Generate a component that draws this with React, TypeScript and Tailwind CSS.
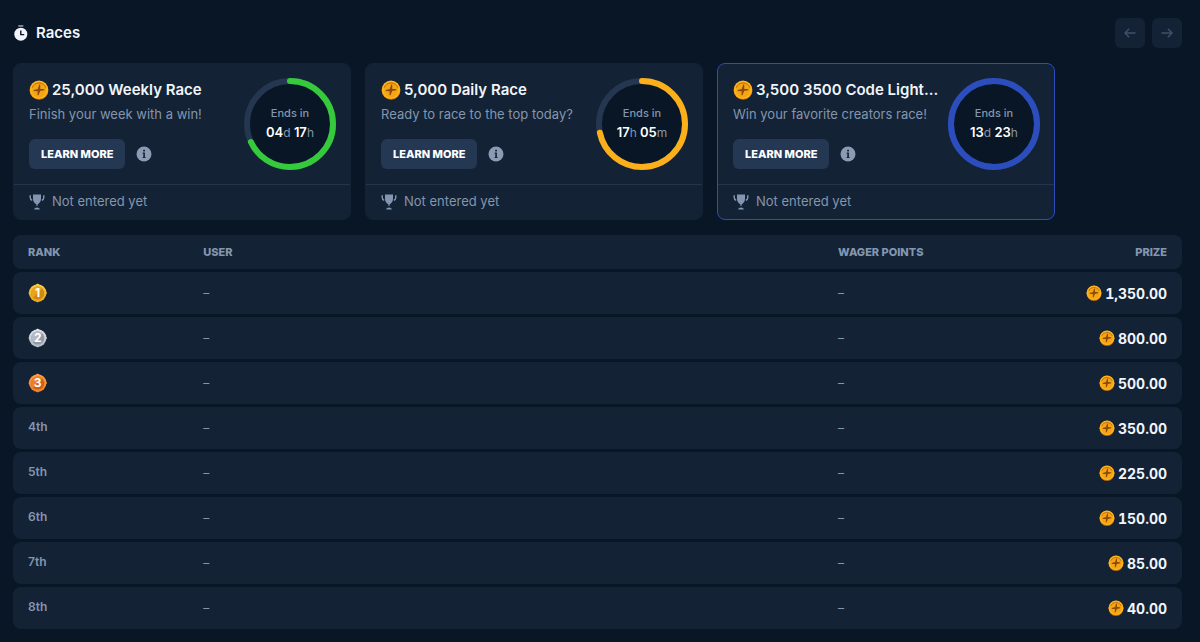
import { useId } from "react";

type Race = {
  amount: string;
  name: string;
  blurb: string;
  color: string;
  progress: number;
  time: [string, string][];
  active?: boolean;
};

const races: Race[] = [
  { amount: "25,000", name: "Weekly Race", blurb: "Finish your week with a win!", color: "#35c93c", progress: 0.68, time: [["04", "d"], ["17", "h"]] },
  { amount: "5,000", name: "Daily Race", blurb: "Ready to race to the top today?", color: "#fbb01b", progress: 0.716, time: [["17", "h"], ["05", "m"]] },
  { amount: "3,500", name: "3500 Code Light...", blurb: "Win your favorite creators race!", color: "#2b4dbd", progress: 1, time: [["13", "d"], ["23", "h"]], active: true },
];

const prizes = ["1,350.00", "800.00", "500.00", "350.00", "225.00", "150.00", "85.00", "40.00"];

const medals = [
  { light: "#fbd04a", rim: "#e9a51a", face: "#cf8a10" },
  { light: "#dfe3ea", rim: "#b4bac5", face: "#9299a6" },
  { light: "#ffa04c", rim: "#f07f22", face: "#cf6116" },
];

function Coin({ className }: { className: string }) {
  return (
    <svg viewBox="0 0 20 20" className={className} aria-hidden="true">
      <circle cx="10" cy="10.4" r="9.4" fill="#d97a0b" />
      <circle cx="10" cy="9.8" r="9.2" fill="#fdb41c" />
      <circle cx="10" cy="10" r="7.3" fill="#f4a514" />
      <path d="M3.2 7.6A7.3 7.3 0 0 1 16.8 7.6" fill="none" stroke="#b9690a" strokeWidth="1" />
      <path d="M11.2 4.6l.1 4.3 4 .1-.1 1.2-4.1.9-1.6 4.2-1-.1.1-4-3.9-.1.1-1.2 4-1 1.4-4.4z" fill="#8f4a08" />
    </svg>
  );
}

function Medal({ place }: { place: number }) {
  const id = useId();
  const m = medals[place - 1];
  return (
    <svg viewBox="0 0 20 20" className="size-5" role="img" aria-label={`Rank ${place}`}>
      <defs>
        <linearGradient id={id} x1="0" y1="0" x2="0" y2="1">
          <stop offset="0" stopColor={m.light} />
          <stop offset="1" stopColor={m.rim} />
        </linearGradient>
      </defs>
      <g fill={`url(#${id})`}>
        <circle cx="9.700" cy="10" r="8.700" />
        <path d="M9.700 .6l3 2.200h-6zM9.700 19.600l3.400-2.400H6.300zM.4 10l2-3v6zM19 10l-2-3v6z" />
      </g>
      <circle cx="9.700" cy="10" r="6.600" fill={m.face} />
      <path d="M5 14.700A6.600 6.600 0 0 1 14.400 5.300z" fill={m.rim} />
      <text x="9.7" y="14.2" textAnchor="middle" className="fill-white font-['Inter',sans-serif] text-[12px] font-bold">{place}</text>
    </svg>
  );
}

function Stopwatch() {
  return (
    <svg viewBox="0 0 16 16" className="size-4" aria-hidden="true">
      <path d="M5.300 .2h5v1.500h-5z" fill="#9aa7bb" />
      <circle cx="7.800" cy="9.200" r="6.500" fill="#f1f5fb" />
      <path d="M7.800 5.600v4h3.400" fill="none" stroke="#081625" strokeWidth="1.400" />
    </svg>
  );
}

function Trophy() {
  return (
    <svg viewBox="0 0 16 16" className="size-4" fill="#8496af" aria-hidden="true">
      <path d="M4 .4h8v4.400c0 2.600-1.200 4.400-3.300 5.400v1.600H7.300v-1.600C5.200 9.200 4 7.400 4 4.800z" />
      <path d="M5.200 15.500c.2-1.400 1-2.100 2.800-2.100s2.600.7 2.800 2.100z" />
      <path d="M1.200 1.200v2.400c0 1.300.7 2.300 2 2.800M14.800 1.200v2.400c0 1.300-.7 2.300-2 2.800" fill="none" stroke="#8496af" strokeWidth="1.400" />
    </svg>
  );
}

function InfoIcon() {
  return (
    <svg viewBox="0 0 16 16" className="size-4" aria-hidden="true">
      <circle cx="8" cy="8" r="7.5" fill="#8b9bb4" />
      <path d="M7.200 3.700h1.700v1.700H7.200zM6.700 6.600h2.200v4.300h.6V12H6.700v-1.100h.6V7.700h-.6z" fill="#132234" />
    </svg>
  );
}

function Arrow({ left }: { left?: boolean }) {
  return (
    <svg viewBox="0 0 12 12" className="size-3" fill="none" stroke="#405069" strokeWidth="1.5" strokeLinecap="round" strokeLinejoin="round" aria-hidden="true">
      {left ? <path d="M11 6H1.200M4.700 2.300L1 6l3.700 3.700" /> : <path d="M1 6h9.800M7.300 2.300L11 6 7.300 9.700" />}
    </svg>
  );
}

function Countdown({ race }: { race: Race }) {
  const length = 2 * Math.PI * 43;
  return (
    <div className="grid size-[92px] shrink-0 place-items-center">
      <svg viewBox="0 0 92 92" className="col-start-1 row-start-1 size-full -rotate-90" aria-hidden="true">
        <circle cx="46" cy="46" r="43" fill="#081625" stroke="#253650" strokeWidth="6" />
        <circle cx="46" cy="46" r="43" fill="none" stroke={race.color} strokeWidth="6" strokeLinecap="round" strokeDasharray={`${length * race.progress} ${length}`} />
      </svg>
      <div className="relative col-start-1 row-start-1 pb-[2px] text-center leading-[19px]">
        <p className="text-[11px] font-medium text-[#8496af]">Ends in</p>
        <p className="text-[13px] font-semibold whitespace-nowrap text-white">
          {race.time.map(([value, unit], i) => (
            <span key={unit}>
              {i > 0 && " "}
              {value}
              <span className="text-[12px] font-normal text-[#8496af]">{unit}</span>
            </span>
          ))}
        </p>
      </div>
    </div>
  );
}

function RaceCard({ race }: { race: Race }) {
  return (
    <article className={`min-w-0 basis-[338px] rounded-lg border bg-[#132234] ${race.active ? "border-[#2b4dbd]" : "border-[#132234]"}`}>
      <div className="flex items-start justify-between gap-1 py-[14px] pr-[14px] pl-[15px]">
        <div className="min-w-0">
          <div className="flex items-center gap-[3px]">
            <Coin className="size-5 shrink-0" />
            <h2 className="text-[15px] leading-6 font-semibold whitespace-nowrap text-[#f1f5fb]">
              {race.amount} {race.name}
            </h2>
          </div>
          <p className="mt-[2px] text-[13px] leading-5 whitespace-nowrap text-[#8496af]">{race.blurb}</p>
          <div className="mt-[15px] flex items-center gap-[11px]">
            <button type="button" className="h-[30px] rounded-md bg-[#253853] px-3 text-[11px] font-extrabold whitespace-nowrap text-white">
              LEARN MORE
            </button>
            <button type="button" aria-label="Race information">
              <InfoIcon />
            </button>
          </div>
        </div>
        <Countdown race={race} />
      </div>
      <div className="flex h-[35px] items-center gap-[7px] border-t border-[#24354c] px-[15px] text-[13px] text-[#8496af]">
        <Trophy />
        Not entered yet
      </div>
    </article>
  );
}

export default function App() {
  return (
    <main className="min-h-screen bg-[#081625] pt-[18px] pr-[18px] pb-[10px] pl-[13px] font-['Inter',sans-serif]">
      <header className="flex h-[30px] items-center justify-between">
        <h1 className="flex items-center gap-[7px] text-[15px] leading-5 font-semibold text-[#f1f5fb]">
          <Stopwatch />
          Races
        </h1>
        <div className="flex gap-[7px]">
          <button type="button" disabled aria-label="Previous races" className="grid size-[30px] place-items-center rounded-md bg-[#132234]">
            <Arrow left />
          </button>
          <button type="button" disabled aria-label="Next races" className="grid size-[30px] place-items-center rounded-md bg-[#132234]">
            <Arrow />
          </button>
        </div>
      </header>

      <section className="mt-[15px] flex gap-[14px]">
        {races.map((race) => (
          <RaceCard key={race.amount} race={race} />
        ))}
      </section>

      <table className="mt-3 w-full table-fixed border-separate border-spacing-x-0 border-spacing-y-[3px] text-left">
        <colgroup>
          <col className="w-[15%]" />
          <col className="w-[54.3%]" />
          <col className="w-[15%]" />
          <col />
        </colgroup>
        <thead>
          <tr className="h-[34px] text-[11px] text-[#8496af]">
            <th className="rounded-l-lg bg-[#132234] px-[15px] font-extrabold">RANK</th>
            <th className="bg-[#132234] px-[15px] font-extrabold">USER</th>
            <th className="bg-[#132234] px-[15px] font-extrabold">WAGER POINTS</th>
            <th className="rounded-r-lg bg-[#132234] px-[15px] text-right font-extrabold">PRIZE</th>
          </tr>
        </thead>
        <tbody>
          {prizes.map((prize, i) => (
            <tr key={prize} className="h-[42px] text-[12px] text-[#8496af]">
              <td className="rounded-l-lg bg-[#132234] px-[15px] font-semibold">
                {i < 3 ? <Medal place={i + 1} /> : <span className="block pb-[3px]">{i + 1}th</span>}
              </td>
              <td className="bg-[#132234] px-[15px]">–</td>
              <td className="bg-[#132234] px-[15px]">–</td>
              <td className="rounded-r-lg bg-[#132234] px-[15px]">
                <span className="flex items-center justify-end gap-[3px] text-[14px] font-bold text-[#f1f5fb] tabular-nums">
                  <Coin className="size-4" />
                  {prize}
                </span>
              </td>
            </tr>
          ))}
        </tbody>
      </table>
    </main>
  );
}
